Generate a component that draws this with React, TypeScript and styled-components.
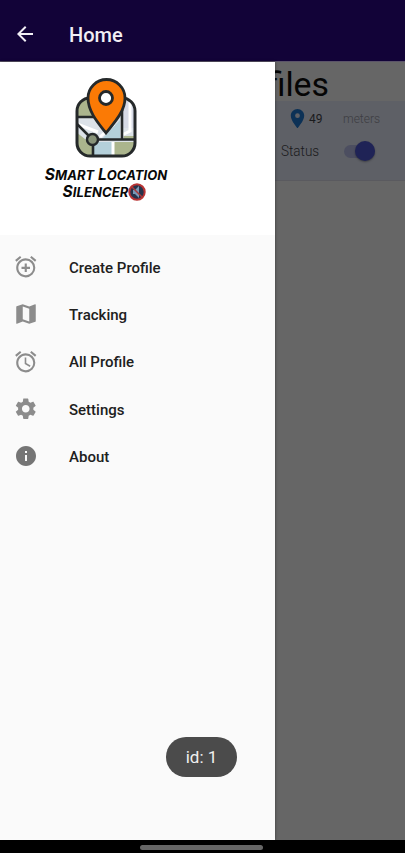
import React from "react";
import styled, { createGlobalStyle } from "styled-components";
import { MdAddAlarm, MdAlarm, MdArrowBack, MdInfo, MdLocationOn, MdMap, MdSettings } from "react-icons/md";

const GlobalStyle = createGlobalStyle`
  * { box-sizing: border-box; }
  body { margin: 0; background: #fff; font-family: Roboto, "Liberation Sans", sans-serif; }
`;

const Screen = styled.div`
  position: relative;
  display: flex;
  flex-direction: column;
  width: 405px;
  height: 853px;
  overflow: hidden;
`;

const AppBar = styled.header`
  display: flex;
  align-items: center;
  flex: none;
  height: 62px;
  padding: 7px 0 0 13px;
  background: #120338;
  border-bottom: 1px solid #5b5469;
  color: #f1eff5;
`;

const BarTitle = styled.h1`
  margin: 2px 0 0 32px;
  font-size: 20px;
  font-weight: 500;
  line-height: 24px;
`;

const Body = styled.div`
  display: flex;
  flex: 1;
  min-height: 0;
`;

const Drawer = styled.nav`
  width: 275px;
  flex: none;
  background: #fafafa;
  box-shadow: 0 0 3px rgba(0, 0, 0, 0.45);
  z-index: 1;
`;

const DrawerHeader = styled.div`
  height: 173px;
  padding: 16px 0 0 37px;
  background: #fff;
`;

const Brand = styled.div`
  display: flex;
  flex-direction: column;
  align-items: center;
  width: 138px;
`;

const BrandLine = styled.div<{ $tight?: boolean }>`
  display: flex;
  align-items: center;
  height: 17px;
  margin-top: ${(p) => (p.$tight ? 0 : 6)}px;
  margin-right: ${(p) => (p.$tight ? 3 : 0)}px;
  color: #080808;
  font-family: Inter, "Open Sans", sans-serif;
  font-size: 15.5px;
  font-style: italic;
  font-weight: 700;
  letter-spacing: ${(p) => (p.$tight ? 0.1 : 0.05)}px;
  white-space: nowrap;
`;

const Caps = styled.span`
  font-size: 13px;
  text-transform: uppercase;
`;

const MenuList = styled.ul`
  margin: 0;
  padding: 9px 0 0;
  list-style: none;
`;

const MenuItem = styled.li`
  display: flex;
  align-items: center;
  height: 47.4px;
  font-size: 15px;
  font-weight: 500;
  color: #202020;
`;

const IconSlot = styled.span<{ $dark?: boolean }>`
  display: flex;
  justify-content: center;
  width: 51px;
  margin: -2px 18px 0 0;
  color: ${(p) => (p.$dark ? "#757575" : "#8c8c8c")};
`;

const Page = styled.main`
  flex: 1;
  min-width: 0;
  background: #666;
`;

const PageTitle = styled.h2`
  display: flex;
  justify-content: flex-end;
  height: 39px;
  margin: 0;
  padding: 3px 76px 0 0;
  font-size: 33.8px;
  font-weight: 400;
  line-height: 39px;
  color: #050505;
`;

const ProfileCard = styled.section`
  height: 80px;
  background: #5e6066;
  border-bottom: 1px solid #5a5a5f;
  color: #1a1a1c;
`;

const CardRow = styled.div<{ $h: number }>`
  display: flex;
  align-items: center;
  height: ${(p) => p.$h}px;
`;

const PinSlot = styled.span`
  display: flex;
  margin: 0 0 0 11px;
  color: #0c3156;
`;

const Radius = styled.span`
  width: 34px;
  font-size: 12px;
`;

const Unit = styled.span`
  font-size: 12px;
  font-weight: 300;
  color: #3d3d42;
`;

const StatusLabel = styled.span`
  width: 63px;
  margin-left: 6px;
  font-size: 15px;
  font-weight: 300;
  transform: scaleX(0.9);
  transform-origin: left;
`;

const Track = styled.span`
  display: flex;
  align-items: center;
  justify-content: flex-end;
  width: 31px;
  height: 13px;
  border-radius: 7px;
  background: #4c4e60;
`;

const Thumb = styled.span`
  flex: none;
  width: 20px;
  height: 20px;
  border-radius: 50%;
  background: #1f2356;
  box-shadow: 0 1px 2px rgba(0, 0, 0, 0.35);
`;

const SystemNav = styled.footer`
  display: flex;
  justify-content: center;
  flex: none;
  height: 13px;
  padding: 5px 2px 0 0;
  background: #000;
`;

const Handle = styled.span`
  width: 123px;
  height: 5px;
  border-radius: 3px;
  background: #666;
`;

const Toast = styled.div`
  position: absolute;
  left: 166px;
  top: 737px;
  z-index: 2;
  display: flex;
  align-items: center;
  justify-content: center;
  width: 71px;
  height: 40px;
  border-radius: 20px;
  background: #4b4b4b;
  color: #f0f0f0;
  font-size: 17px;
`;

const LogoMark = () => (
  <svg width="64" height="82" viewBox="0 0 64 82">
    <defs>
      <clipPath id="tile">
        <rect x="3" y="20" width="58" height="58" rx="13" />
      </clipPath>
    </defs>
    <g clipPath="url(#tile)">
      <rect x="2" y="20" width="60" height="59" fill="#dce2e8" />
      <path d="M2 20H22V40H2zM2 54L16 65V79H2zM50 58H62V62H50zM40 64H62V79H40zM14 62H20V79H14z" fill="#abb58d" />
      <path d="M20 64H38V79H20zM28 61L46 42V62z" fill="#b4d0da" />
      <path d="M49 20H62V50H49z" fill="#d6dae6" />
      <path d="M3 46L24 54M26 59L40 46M39 64V79M56 24V53L48 57" fill="none" stroke="#fff" strokeWidth="3" />
      <path d="M3 39H21M3 46L16 59M19 63V79M19 61.500H61M48 32V62" fill="none" stroke="#25292a" strokeWidth="2.600" />
    </g>
    <rect x="3" y="20" width="58" height="58" rx="13" fill="none" stroke="#25292a" strokeWidth="3" />
    <circle cx="18.500" cy="61.500" r="5.500" fill="#89947a" stroke="#25292a" strokeWidth="2.500" />
    <path d="M32 55C25 46 14 34 14 20A18.500 18.500 0 0 1 51 20C51 34 39 46 32 55z" fill="#fb7a05" stroke="#25292a" strokeWidth="2.800" />
    <circle cx="32" cy="20" r="6.500" fill="#fff" stroke="#25292a" strokeWidth="2.800" />
  </svg>
);

const MuteBadge = () => (
  <svg width="18" height="18" viewBox="0 0 18 18">
    <circle cx="9" cy="9" r="7.700" fill="#26334b" stroke="#b83434" strokeWidth="2" />
    <path d="M5 7H7L11 3V15L7 11H5z" fill="#7899b6" />
    <path d="M4 4L14 14" stroke="#a83a3d" strokeWidth="1.500" />
  </svg>
);

const items = [
  { label: "Create Profile", icon: <MdAddAlarm size={25.5} /> },
  { label: "Tracking", icon: <MdMap size={26} /> },
  { label: "All Profile", icon: <MdAlarm size={25.5} /> },
  { label: "Settings", icon: <MdSettings size={25.5} /> },
  { label: "About", icon: <MdInfo size={24} />, dark: true },
];

export default function App() {
  return (
    <>
      <GlobalStyle />
      <Screen>
        <AppBar>
          <MdArrowBack size={24} />
          <BarTitle>Home</BarTitle>
        </AppBar>
        <Body>
          <Drawer>
            <DrawerHeader>
              <Brand>
                <LogoMark />
                <BrandLine>
                  S<Caps>mart</Caps>&nbsp;L<Caps>ocation</Caps>
                </BrandLine>
                <BrandLine $tight>
                  S<Caps>ilencer</Caps>
                  <MuteBadge />
                </BrandLine>
              </Brand>
            </DrawerHeader>
            <MenuList>
              {items.map((item) => (
                <MenuItem key={item.label}>
                  <IconSlot $dark={item.dark}>{item.icon}</IconSlot>
                  {item.label}
                </MenuItem>
              ))}
            </MenuList>
          </Drawer>
          <Page>
            <PageTitle>files</PageTitle>
            <ProfileCard>
              <CardRow $h={35}>
                <PinSlot>
                  <MdLocationOn size={23} />
                </PinSlot>
                <Radius>49</Radius>
                <Unit>meters</Unit>
              </CardRow>
              <CardRow $h={30}>
                <StatusLabel>Status</StatusLabel>
                <Track>
                  <Thumb />
                </Track>
              </CardRow>
            </ProfileCard>
          </Page>
        </Body>
        <SystemNav>
          <Handle />
        </SystemNav>
        <Toast>id: 1</Toast>
      </Screen>
    </>
  );
}
